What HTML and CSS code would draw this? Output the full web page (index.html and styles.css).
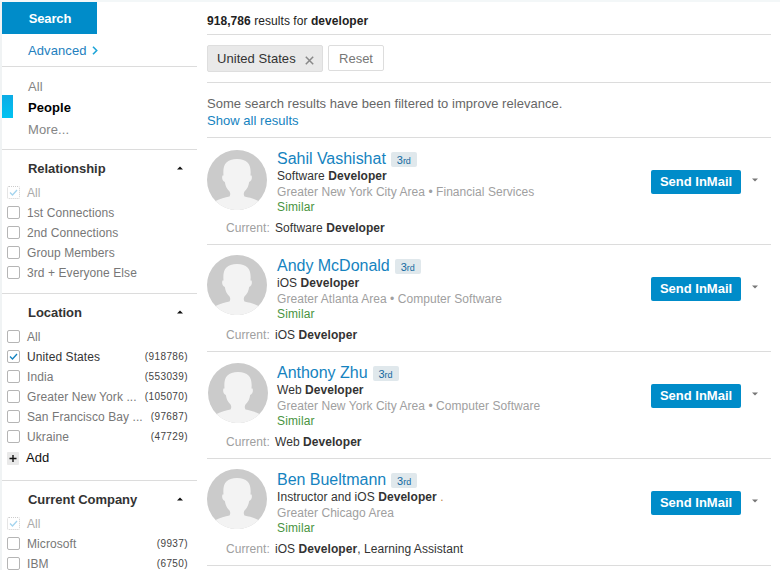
FILE: index.html
```html
<!DOCTYPE html>
<html lang="en">
<head>
<meta charset="utf-8">
<title>developer | Search</title>
<link rel="stylesheet" href="styles.css">
</head>
<body>
<svg class="defs" width="0" height="0" aria-hidden="true">
  <symbol id="ghost" viewBox="0 0 60 60">
    <circle cx="30" cy="30" r="30" fill="#cbcbcb"/>
    <path d="M8.500 51C13 48.500 18 47.500 22.500 46.500Q24 44 22.500 41.500C19.500 38.500 18.500 36 17.800 32C15.500 31.500 14.500 28 15.500 25.500L16.500 25.500C15.500 15 19 9 30 9S44.500 15 43.500 25.500L44.500 25.500C45.500 28 44.500 31.500 42.200 32C41.500 36 40.500 38.500 37.500 41.500Q36 44 37.500 46.500C42 47.500 47 48.500 51.500 51A30 30 0 0 1 8.500 51Z" fill="#f3f3f3"/>
  </symbol>
  <symbol id="tick" viewBox="0 0 13 13"><path d="M3 6.500L5.500 9L10 4" fill="none" stroke="currentColor" stroke-width="1.300"/></symbol>
  <symbol id="up" viewBox="0 0 6 4"><path d="M0 3.500L3 .5L6 3.500Z" fill="#111"/></symbol>
  <symbol id="down" viewBox="0 0 6 4"><path d="M0 .5H6L3 3.500Z" fill="#777"/></symbol>
</svg>
<div class="page">
  <aside class="sidebar">
    <button class="search">Search</button>
    <a class="advanced"><span>Advanced</span><svg width="6" height="9" viewBox="0 0 6 9"><path d="M1 .7L4.700 4.500L1 8.300" fill="none" stroke="#1fa5d8" stroke-width="1.600"/></svg></a>
    <nav class="verticals">
      <a>All</a>
      <a class="active">People</a>
      <a class="more">More...</a>
    </nav>
    <section class="facet relationship">
      <h3>Relationship<svg width="6" height="4"><use href="#up"/></svg></h3>
      <ul>
        <li class="disabled"><i><svg><use href="#tick"/></svg></i><span class="label">All</span></li>
        <li><i></i><span class="label">1st Connections</span></li>
        <li><i></i><span class="label">2nd Connections</span></li>
        <li><i></i><span class="label">Group Members</span></li>
        <li><i></i><span class="label">3rd + Everyone Else</span></li>
      </ul>
    </section>
    <section class="facet location">
      <h3>Location<svg width="6" height="4"><use href="#up"/></svg></h3>
      <ul>
        <li><i></i><span class="label">All</span></li>
        <li class="checked"><i><svg><use href="#tick"/></svg></i><span class="label">United States</span><span class="count">(918786)</span></li>
        <li><i></i><span class="label">India</span><span class="count">(553039)</span></li>
        <li><i></i><span class="label">Greater New York ...</span><span class="count">(105070)</span></li>
        <li><i></i><span class="label">San Francisco Bay ...</span><span class="count">(97687)</span></li>
        <li><i></i><span class="label">Ukraine</span><span class="count">(47729)</span></li>
      </ul>
      <a class="add"><svg width="12" height="13" viewBox="0 0 12 13"><rect width="12" height="13" rx="1" fill="#e9e9e9"/><path d="M2.500 6.500H9.500M6 3V10" stroke="#111" stroke-width="1.400"/></svg><span>Add</span></a>
    </section>
    <section class="facet company">
      <h3>Current Company<svg width="6" height="4"><use href="#up"/></svg></h3>
      <ul>
        <li class="disabled"><i><svg><use href="#tick"/></svg></i><span class="label">All</span></li>
        <li><i></i><span class="label">Microsoft</span><span class="count">(9937)</span></li>
        <li><i></i><span class="label">IBM</span><span class="count">(6750)</span></li>
      </ul>
    </section>
  </aside>
  <main class="results">
    <p class="summary"><b>918,786</b> results for <b>developer</b></p>
    <div class="filters">
      <span class="pill">United States<svg width="9" height="9" viewBox="0 0 9 9"><path d="M.8 .8L8.200 8.200M8.200 .8L.8 8.200" stroke="#888" stroke-width="1.500"/></svg></span>
      <button class="reset">Reset</button>
    </div>
    <div class="notice"><p>Some search results have been filtered to improve relevance.</p><a>Show all results</a></div>

    <article class="result">
      <svg class="photo"><use href="#ghost"/></svg>
      <div class="info">
        <h2><a>Sahil Vashishat</a><span class="degree">3<small>rd</small></span></h2>
        <p class="headline">Software <b>Developer</b></p>
        <p class="place">Greater New York City Area • Financial Services</p>
        <a class="similar">Similar</a>
      </div>
      <div class="actions"><button>Send InMail</button><svg width="6" height="4"><use href="#down"/></svg></div>
      <p class="current"><span>Current:</span>Software <b>Developer</b></p>
    </article>
    <article class="result raised">
      <svg class="photo"><use href="#ghost"/></svg>
      <div class="info">
        <h2><a>Andy McDonald</a><span class="degree">3<small>rd</small></span></h2>
        <p class="headline">iOS <b>Developer</b></p>
        <p class="place">Greater Atlanta Area • Computer Software</p>
        <a class="similar">Similar</a>
      </div>
      <div class="actions"><button>Send InMail</button><svg width="6" height="4"><use href="#down"/></svg></div>
      <p class="current"><span>Current:</span>iOS <b>Developer</b></p>
    </article>
    <article class="result shifted">
      <svg class="photo"><use href="#ghost"/></svg>
      <div class="info">
        <h2><a>Anthony Zhu</a><span class="degree">3<small>rd</small></span></h2>
        <p class="headline">Web <b>Developer</b></p>
        <p class="place">Greater New York City Area • Computer Software</p>
        <a class="similar">Similar</a>
      </div>
      <div class="actions"><button>Send InMail</button><svg width="6" height="4"><use href="#down"/></svg></div>
      <p class="current"><span>Current:</span>Web <b>Developer</b></p>
    </article>
    <article class="result raised">
      <svg class="photo"><use href="#ghost"/></svg>
      <div class="info">
        <h2><a>Ben Bueltmann</a><span class="degree">3<small>rd</small></span></h2>
        <p class="headline">Instructor and iOS <b>Developer</b> <span class="dot">.</span></p>
        <p class="place">Greater Chicago Area</p>
        <a class="similar">Similar</a>
      </div>
      <div class="actions"><button>Send InMail</button><svg width="6" height="4"><use href="#down"/></svg></div>
      <p class="current"><span>Current:</span>iOS <b>Developer</b>, Learning Assistant</p>
    </article>
  </main>
</div>
</body>
</html>
```
FILE: styles.css
```css
* { box-sizing: border-box; margin: 0; padding: 0; }
body { height: 570px; overflow: hidden; background: #fff; font: 12px/16px "Liberation Sans", Arial, sans-serif; color: #333; }
button { font-family: inherit; border: 0; }
ul { list-style: none; }
.defs { position: absolute; }
.page { display: flex; height: 570px; border-top: 2px solid #f3f7f8; border-left: 2px solid #f0f3f4; overflow: hidden; }

.sidebar { width: 195px; flex: none; }
.search { display: block; width: 95px; height: 32px; padding: 1px 0 0 1px; background: #008cc9; color: #fff; font-size: 13px; font-weight: bold; line-height: 31px; letter-spacing: -.15px; }
.advanced { display: flex; align-items: center; gap: 6px; height: 33px; padding: 1px 0 0 26px; border-bottom: 1px solid #dcdcdc; font-size: 13px; letter-spacing: .1px; color: #2380be; }
.advanced svg { margin-left: -1px; }
.verticals { height: 83px; padding-top: 6px; border-bottom: 1px solid #dcdcdc; font-size: 13px; }
.verticals a { display: block; height: 22px; padding-left: 26px; line-height: 27px; letter-spacing: .1px; color: #858585; }
.verticals .active { height: 23px; line-height: 25px; font-weight: bold; letter-spacing: .05px; color: #000; background: linear-gradient(#0cabe5, #00c3f2) 0 0 / 11px 23px no-repeat; }
.verticals .more { line-height: 23px; letter-spacing: .1px; }

.facet { border-bottom: 1px solid #dcdcdc; }
.relationship { height: 144px; }
.location { height: 187px; }
.facet h3 { display: flex; align-items: center; justify-content: space-between; height: 32px; padding: 6px 14px 0 26px; font-size: 13px; line-height: 18px; letter-spacing: -.04px; color: #333; }
.facet h3 svg { margin-top: -3px; }
.facet li { display: flex; align-items: center; height: 20px; padding: 0 9px 0 5px; color: #777; letter-spacing: .08px; }
.facet li i { width: 13px; height: 13px; margin-right: 7px; border: 1px solid #b5b5b5; border-radius: 2px; }
.facet li i svg { display: block; width: 13px; height: 13px; margin: -1px; color: #1583c0; }
.facet li span { padding-top: 2px; }
.facet .disabled { color: #aaa; }
.facet .disabled i { border: 1px dotted #ccc; }
.facet .disabled i svg { color: #a4d4ee; }
.facet .checked { color: #333; }
.facet .count { margin-left: auto; font-size: 10px; letter-spacing: .4px; color: #444; }
.add { display: flex; align-items: center; gap: 7px; height: 24px; padding-left: 5px; font-size: 13px; color: #111; }
.add svg { margin-top: 1px; }
.add span { margin-top: -1px; }

.results { width: 564px; margin-left: 10px; flex: none; }
.summary { height: 33px; padding-top: 11px; border-bottom: 1px solid #dcdcdc; letter-spacing: .06px; color: #222; }
.filters { display: flex; gap: 5px; height: 48px; padding-top: 10px; border-bottom: 1px solid #dcdcdc; font-size: 13px; }
.pill { display: flex; align-items: center; justify-content: space-between; width: 116px; height: 27px; padding: 0 8px 0 9px; background: #e9e9e9; border: 1px solid #dedede; border-radius: 2px; letter-spacing: .05px; }
.pill svg { margin-top: 3px; }
.reset { width: 56px; height: 26px; background: #fff; border: 1px solid #ddd; border-radius: 2px; font-size: 13px; color: #777; }
.notice { height: 55px; padding-top: 12px; border-bottom: 1px solid #dcdcdc; font-size: 13px; line-height: 17px; letter-spacing: .035px; color: #666; }
.notice a { display: block; color: #1583c0; }

.result { display: grid; grid-template: 78px 28px / 70px 374px 1fr; height: 107px; border-bottom: 1px solid #dcdcdc; }
.photo { width: 60px; height: 60px; margin-top: 12px; }
.shifted .photo { margin: 11px 0 0 1px; }
.raised .photo { margin-top: 10px; }
.info { padding-top: 11px; }
.info h2 { display: flex; height: 19px; font-size: 16px; font-weight: normal; line-height: 19px; letter-spacing: -.02px; color: #1583c0; }
.degree { width: 26px; height: 15px; margin: 3px 0 0 5px; border-radius: 2px; background: #e0e8ec; font-size: 11px; line-height: 17px; text-align: center; color: #1369a0; }
.degree small { font-size: 9px; }
.headline, .place { height: 16px; white-space: nowrap; }
.headline, .current { letter-spacing: .06px; }
.place { letter-spacing: .05px; color: #a0a0a0; }
.similar { display: block; line-height: 15px; letter-spacing: .15px; color: #49943f; }
.dot { color: #c48a4b; }
.actions { display: flex; align-items: flex-start; padding-top: 32px; }
.actions button { width: 90px; height: 24px; border-radius: 2px; background: #008cc9; color: #fff; font-size: 13px; font-weight: bold; line-height: 24px; }
.actions svg { margin: 8px 0 0 11px; }
.current { grid-column: 1 / -1; padding-top: 4px; }
.current span { display: inline-block; width: 49px; margin-left: 19px; color: #a0a0a0; }
```
